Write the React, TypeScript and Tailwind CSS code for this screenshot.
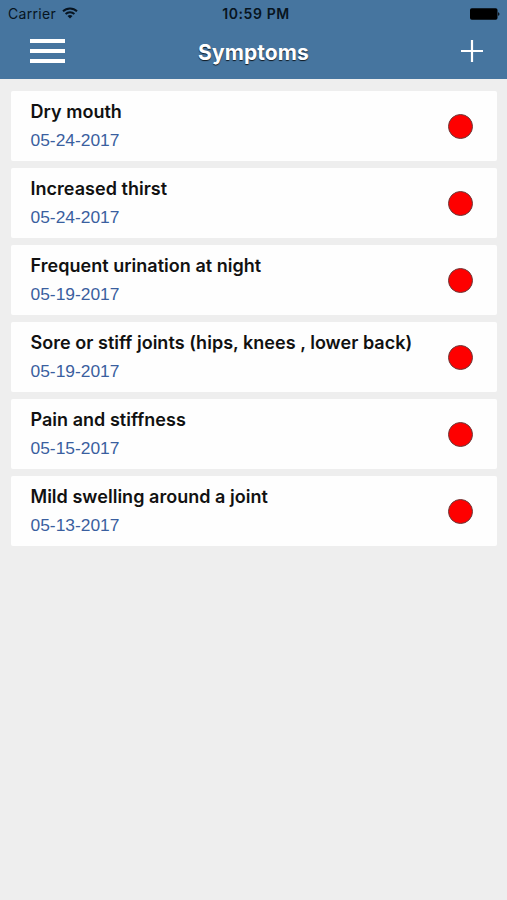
type Symptom = {
  name: string;
  date: string;
};

const symptoms: Symptom[] = [
  { name: 'Dry mouth', date: '05-24-2017' },
  { name: 'Increased thirst', date: '05-24-2017' },
  { name: 'Frequent urination at night', date: '05-19-2017' },
  { name: 'Sore or stiff joints (hips, knees , lower back)', date: '05-19-2017' },
  { name: 'Pain and stiffness', date: '05-15-2017' },
  { name: 'Mild swelling around a joint', date: '05-13-2017' },
];

function WifiIcon() {
  return (
    <svg width="16" height="12" viewBox="0 0 16 12" fill="none" stroke="#071420" strokeWidth="1.9" className="-mt-[2px]">
      <path d="M1 4.3a10 10 0 0 1 14 0" />
      <path d="M3.6 7a6.3 6.3 0 0 1 8.8 0" />
      <path d="M8 11.6 5.5 9.1a3.6 3.6 0 0 1 5 0Z" fill="#071420" stroke="none" />
    </svg>
  );
}

function BatteryIcon() {
  return (
    <svg width="30" height="12" viewBox="0 0 30 12" fill="#000">
      <rect x="0" y="0.2" width="27.5" height="11.6" rx="1.8" />
      <path d="M28.2 4.2c1.6.3 1.6 3.3 0 3.6Z" />
    </svg>
  );
}

function StatusBar() {
  return (
    <div className="grid h-[27px] grid-cols-[1fr_auto_1fr] items-center pl-2 pr-[7px] text-[#071420]">
      <div className="flex items-center gap-[6px]">
        <span className="text-[14px] leading-none tracking-[0.3px]">Carrier</span>
        <WifiIcon />
      </div>
      <span className="pl-1 text-[14px] font-semibold leading-none tracking-[0.6px]">10:59 PM</span>
      <div className="flex justify-end">
        <BatteryIcon />
      </div>
    </div>
  );
}

function Header() {
  return (
    <header className="h-[79px] bg-[#46759f]">
      <StatusBar />
      <div className="grid h-[48px] grid-cols-[1fr_auto_1fr] items-center px-6">
        <button aria-label="Menu" className="ml-[6px] flex w-[35px] flex-col gap-[6px]">
          <span className="h-1 w-full bg-white" />
          <span className="h-1 w-full bg-white" />
          <span className="h-1 w-full bg-white" />
        </button>
        <h1 className="pt-[2px] text-[21px] font-bold leading-none tracking-[0.1px] text-white [text-shadow:0_1px_1px_rgba(0,0,0,0.8)]">
          Symptoms
        </h1>
        <button aria-label="Add symptom" className="justify-self-end">
          <svg width="22" height="22" viewBox="0 0 22 22" stroke="#fff" strokeWidth="2.2">
            <path d="M11 0v22M0 11h22" />
          </svg>
        </button>
      </div>
    </header>
  );
}

function SymptomCard({ name, date }: Symptom) {
  return (
    <li className="flex h-[70px] items-center justify-between rounded-[2px] bg-[#fefefe] pl-[19.5px] pr-6">
      <div>
        <p className="text-[18px] font-semibold leading-[28px] tracking-[0.03px] text-[#111]">{name}</p>
        <p className="font-['Liberation_Sans',sans-serif] text-[17.4px] leading-[28px] text-[#3a5f9f]">{date}</p>
      </div>
      <span className="size-[25px] rounded-full border border-[#6b3a3a] bg-[#fe0000]" />
    </li>
  );
}

export default function App() {
  return (
    <div className="min-h-screen bg-[#eeeeee] font-['Inter',sans-serif]">
      <Header />
      <ul className="flex flex-col gap-[7px] pl-[11px] pr-[10px] pt-3">
        {symptoms.map((symptom) => (
          <SymptomCard key={symptom.name} {...symptom} />
        ))}
      </ul>
    </div>
  );
}
